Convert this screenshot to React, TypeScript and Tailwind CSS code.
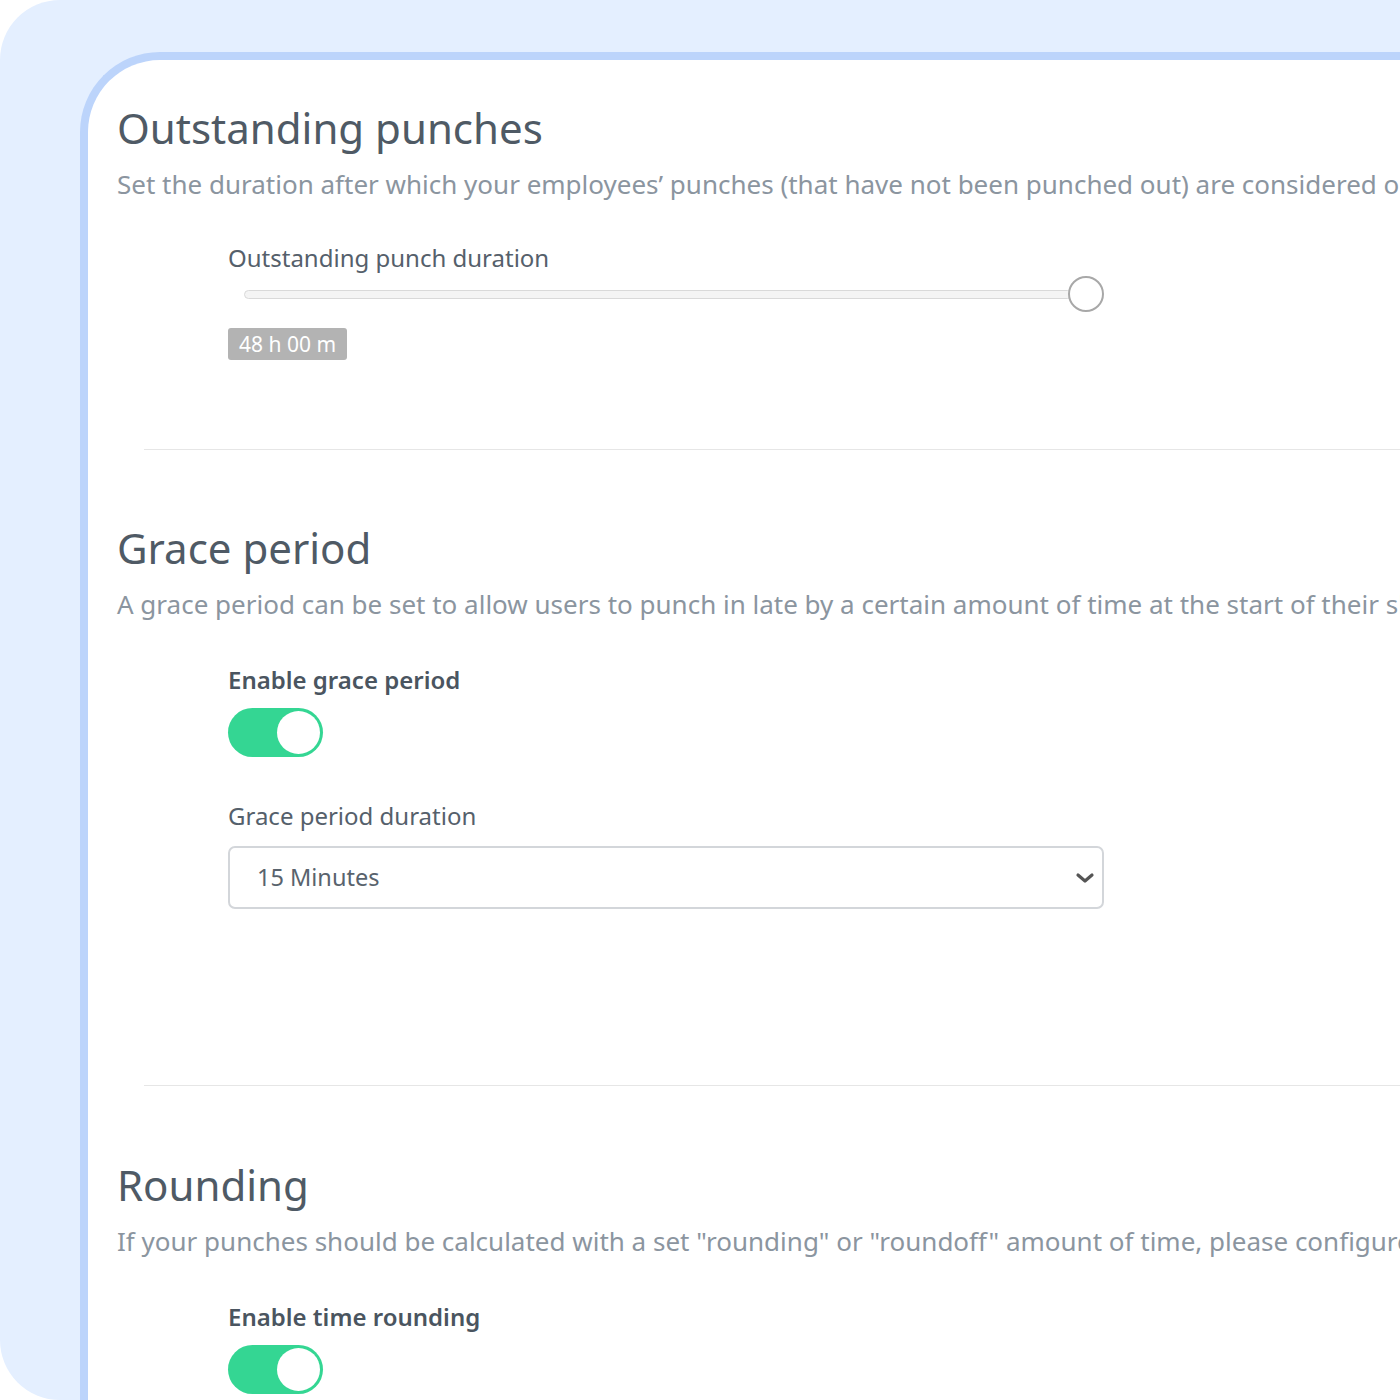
import React from 'react'

function Toggle() {
  return (
    <div className="w-[95px] h-[49px] rounded-full bg-[#34d693] flex items-center justify-end pr-[3px]">
      <div className="w-[43px] h-[43px] rounded-full bg-white" />
    </div>
  )
}

function Divider() {
  return <div className="ml-[27px] mr-[-200px] h-px bg-[#e6e6e6]" />
}

export default function App() {
  return (
    <div
      className="w-[1400px] h-[1400px] overflow-hidden bg-white"
      style={{ fontFamily: '"Noto Sans", "Open Sans", sans-serif' }}
    >
      <div className="w-[1500px] h-[1400px] bg-[#e4efff] rounded-l-[60px] pl-[80px] pt-[52px]">
        <div className="h-[1500px] bg-white border-l-[8px] border-t-[8px] border-[#bcd4fb] rounded-tl-[80px] pl-[29px] pt-[39px]">
          {/* Outstanding punches */}
          <h2 className="text-[42px] leading-[58px] text-[#4f5a65] whitespace-nowrap">Outstanding punches</h2>
          <p className="mt-[10px] text-[26px] leading-[34px] text-[#8b959f] whitespace-nowrap">
            Set the duration after which your employees’ punches (that have not been punched out) are considered outstanding
          </p>
          <div className="ml-[111px] mt-[41px] w-[876px]">
            <div className="text-[24px] leading-[32px] text-[#55606b]">Outstanding punch duration</div>
            <div className="mt-[2px] flex items-center pl-[16px]">
              <div className="flex-1 h-[9px] rounded-full bg-[#f4f4f4] border border-[#d9d9d9]" />
              <div className="w-[36px] h-[36px] rounded-full bg-white border-2 border-[#a8a8a8] -ml-[4px]" />
            </div>
            <div className="mt-[16px] inline-block bg-[#b3b3b3] rounded-[3px] px-[11px] h-[32px] leading-[32px] text-[21px] text-white">
              48 h 00 m
            </div>
          </div>
          <div className="mt-[89px]">
            <Divider />
          </div>

          {/* Grace period */}
          <h2 className="mt-[69px] text-[42px] leading-[58px] text-[#4f5a65] whitespace-nowrap">Grace period</h2>
          <p className="mt-[10px] text-[26px] leading-[34px] text-[#8b959f] whitespace-nowrap">
            A grace period can be set to allow users to punch in late by a certain amount of time at the start of their shift
          </p>
          <div className="ml-[111px] mt-[43px] w-[876px]">
            <div className="text-[24px] leading-[32px] font-semibold text-[#4a5560]">Enable grace period</div>
            <div className="mt-[12px]">
              <Toggle />
            </div>
            <div className="mt-[43px] text-[24px] leading-[32px] text-[#55606b]">Grace period duration</div>
            <div className="mt-[14px] h-[63px] rounded-[7px] border-2 border-[#d3d6da] flex items-center justify-between pl-[27px] pr-[7px]">
              <span className="text-[23.5px] text-[#59636d]">15 Minutes</span>
              <svg width="20" height="14" viewBox="0 0 20 14" fill="none">
                <path d="M3 4l7 6 7-6" stroke="#555" strokeWidth="3.2" strokeLinecap="round" strokeLinejoin="round" />
              </svg>
            </div>
          </div>
          <div className="mt-[176px]">
            <Divider />
          </div>

          {/* Rounding */}
          <h2 className="mt-[70px] text-[42px] leading-[58px] text-[#4f5a65] whitespace-nowrap">Rounding</h2>
          <p className="mt-[10px] text-[26px] leading-[34px] text-[#8b959f] whitespace-nowrap">
            If your punches should be calculated with a set "rounding" or "roundoff" amount of time, please configure it here
          </p>
          <div className="ml-[111px] mt-[43px]">
            <div className="text-[24px] leading-[32px] font-semibold text-[#4a5560]">Enable time rounding</div>
            <div className="mt-[12px]">
              <Toggle />
            </div>
          </div>
        </div>
      </div>
    </div>
  )
}
